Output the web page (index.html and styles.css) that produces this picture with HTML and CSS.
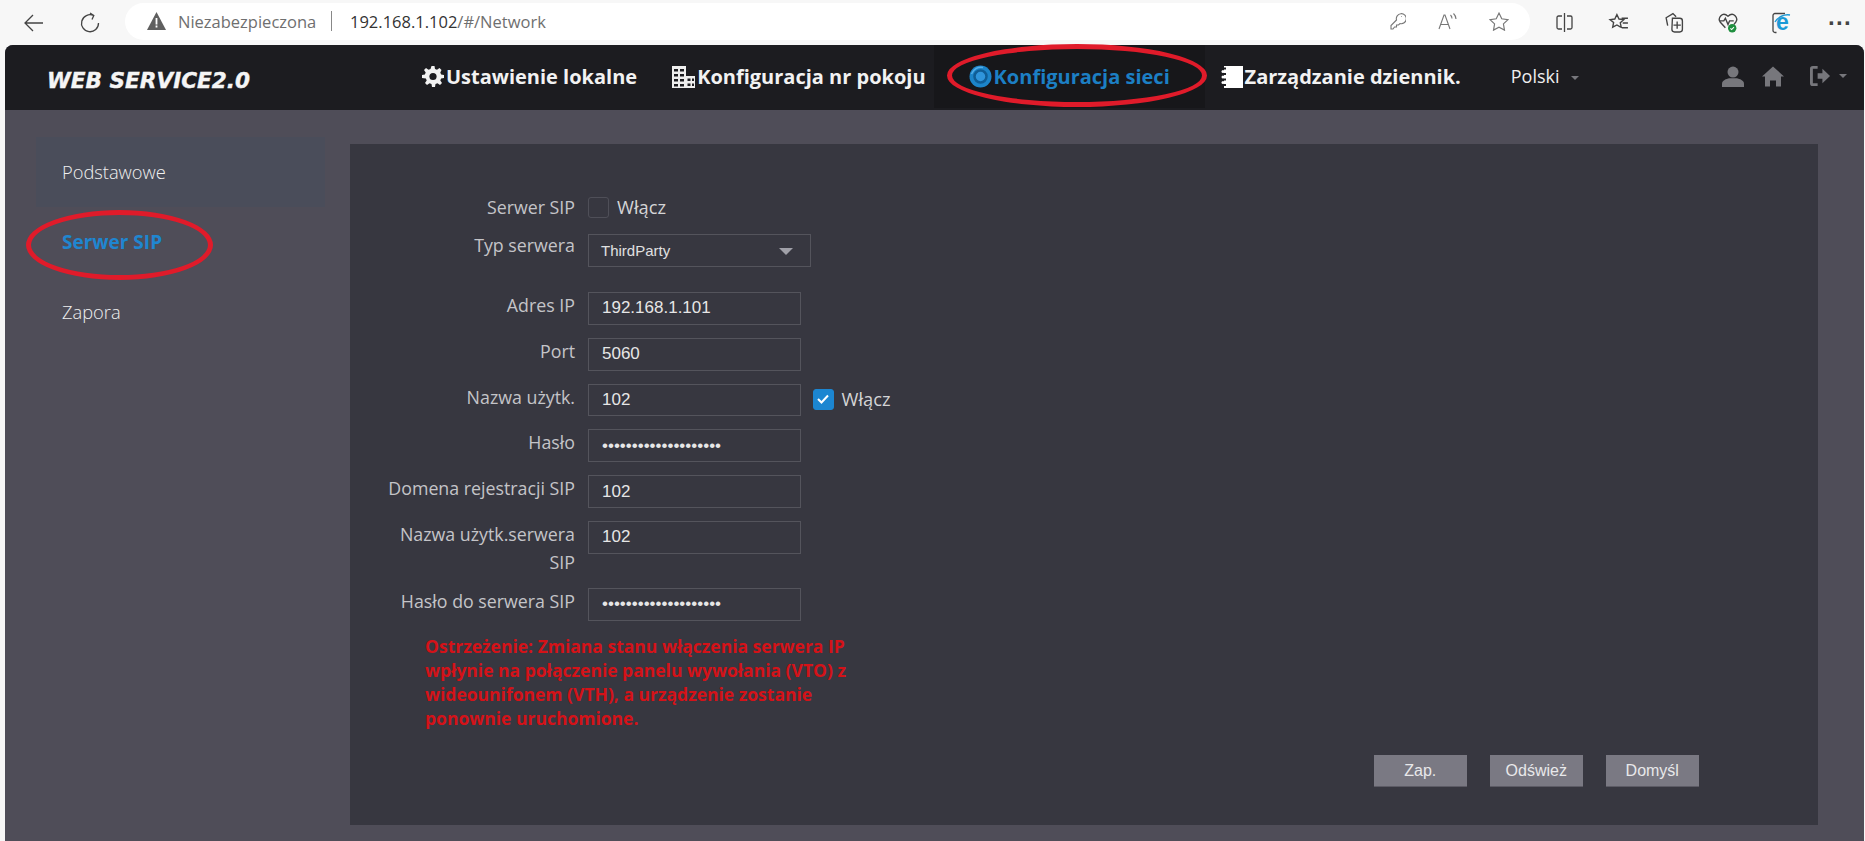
FILE: index.html
```html
<!DOCTYPE html>
<html lang="pl">
<head>
<meta charset="utf-8">
<title>Network</title>
<link rel="stylesheet" href="styles.css">
</head>
<body>
<div class="toolbar">
  <svg class="tb-back" width="20" height="18" viewBox="0 0 20 18"><path d="M9 1 1 9l8 8M1 9h18" class="ln"/></svg>
  <svg class="tb-reload" width="20" height="21" viewBox="0 0 20 21"><path d="M13.500 3.500A8.500 8.500 0 1 0 18.500 11M10 1l3.800 2.500L12 7.500" class="ln"/></svg>
  <div class="address">
    <svg class="warn" width="19" height="18" viewBox="0 0 19 18"><path d="M9.500 0 19 18H0Z" fill="#5f5f5f"/><path d="M8.600 6h1.800v6.500H8.600zM8.600 13.500h1.800v2H8.600z" fill="#fff"/></svg>
    <span class="not-secure">Niezabezpieczona</span>
    <span class="sep"></span>
    <span class="url"><span class="host">192.168.1.102</span>/#/Network</span>
    <span class="addr-icons">
      <svg width="16" height="18" viewBox="0 0 16 18"><path d="M1 17v-3.500l5.500-5.500A5 5 0 1 1 10 11.500L8.500 13H6.500v2h-2L3 17ZM11.200 4.500h.6" class="ln thin"/></svg>
      <svg width="19" height="17" viewBox="0 0 19 17"><path d="M1 16 6 2h1l5 14M3 11.500h7M12.500 2c1 1 1.500 2 1.500 3.500M15.500 .5c1.500 1.500 2.500 3 2.500 5.500" class="ln thin"/></svg>
      <svg width="20" height="19" viewBox="0 0 19 18"><path d="m9.500 1 2.600 5.400 5.900.8-4.300 4.100 1 5.900-5.200-2.800-5.200 2.800 1-5.900L1 7.200l5.900-.8Z" class="ln thin"/></svg>
    </span>
  </div>
  <div class="tb-icons">
    <svg class="ti-split" width="19" height="19" viewBox="0 0 17 19"><path d="M8.500 0v19M6 3H2.500A1.500 1.500 0 0 0 1 4.500v10A1.500 1.500 0 0 0 2.500 16H6M11 3h3.500A1.500 1.500 0 0 1 16 4.500v10a1.500 1.500 0 0 1-1.500 1.500H11" class="ln"/></svg>
    <svg class="ti-fav" width="22" height="20" viewBox="0 0 19 19"><path d="m7.500 1.500 2 4.200 4.500.6-3.300 3 .9 4.200-1-.4-3.100-1.700-4 2.100.9-4.500L1 6.300l4.500-.6ZM12 5h6M13 9.500h5M12 14h6" class="ln"/></svg>
    <svg class="ti-coll" width="20" height="21" viewBox="0 0 18 20"><path d="M3 13 1.500 5.500 8 1.500l3 3M7.500 6h7A2.500 2.500 0 0 1 17 8.500v8a2.500 2.500 0 0 1-2.500 2.500h-5A2.500 2.500 0 0 1 7 16.500ZM12 9v7M8.500 12.500h7" class="ln"/></svg>
    <svg class="ti-heart" width="20" height="21" viewBox="0 0 19 20"><path d="M7 15 2 9.500C-.5 6 4-1 9.500 4 15-1 19.500 6 17 9.500L15 12M2 8.500h3.500L7 6l2.500 6L11 8.500h4" class="ln"/><circle cx="13.500" cy="15.500" r="4" fill="#1f8f3f"/><path d="m11.800 15.500 1.200 1.200 2.200-2.200" fill="none" stroke="#fff"/></svg>
    <span class="ie">
      <svg width="20" height="22" viewBox="0 0 20 22"><path d="M4.500 20.500H3a2 2 0 0 1-2-2V3.500a2 2 0 0 1 2-2h10" class="ln"/><path d="M3 10C6 5 12 2 18 3" fill="none" stroke="#1b9ad6" stroke-width="1.400"/></svg>
      <span class="ie-e">e</span>
    </span>
    <span class="dots">···</span>
  </div>
</div>

<div class="app">
  <header class="topbar">
    <div class="logo">WEB SERVICE2.0</div>
    <nav class="nav">
      <a class="nav-item nav-local">
        <svg width="22" height="22" viewBox="0 0 22 22"><path d="M9.500 0h3l.5 3 2 .8 2.500-1.700 2 2L18.300 6.500l.8 2 2.900.5v3l-2.900.5-.8 2 1.700 2.400-2 2-2.500-1.700-2 .8-.5 3h-3l-.5-3-2-.8-2.500 1.700-2-2 1.700-2.400-.8-2L0 12V9l2.900-.5.8-2L2 4.100l2-2 2.500 1.700 2-.8Z" fill="#f2f2f2"/><circle cx="11" cy="10.500" r="3.600" fill="#1c1c20"/></svg>
        <span>Ustawienie lokalne</span>
      </a>
      <a class="nav-item nav-room">
        <svg width="23" height="22" viewBox="0 0 23 22"><path d="M0 0h14v22H0zM14 10h9v12h-9z" fill="#eee"/><path d="M2 3h4v2.500H2zM8 3h4v2.500H8zM2 8h4v2.500H2zM8 8h4v2.500H8zM2 13h4v2.500H2zM8 13h4v2.500H8zM2 18h4v2.500H2zM8 18h4v2.500H8zM15.500 12.500h3V15h-3zM20 12.500h2V15h-2zM15.500 17.500h3V20h-3zM20 17.500h2V20h-2z" fill="#1c1c20"/></svg>
        <span>Konfiguracja nr pokoju</span>
      </a>
      <a class="nav-item nav-net active">
        <svg width="23" height="23" viewBox="0 0 23 23"><circle cx="11.500" cy="11.500" r="11" fill="#1c84c9"/><circle cx="11.500" cy="11.500" r="6" fill="#2f95dc" stroke="#0f5d96" stroke-width="2.500"/><path d="M2.500 9C4 4.500 9 1.500 14 2.500" fill="none" stroke="#55aee8" stroke-width="1.500"/></svg>
        <span>Konfiguracja sieci</span>
        <i class="ring ring-nav"></i>
      </a>
      <a class="nav-item nav-log">
        <svg width="22" height="22" viewBox="0 0 22 22"><path d="M3 0h19v22H3z" fill="#fff"/><path d="M3 2.500h2M3 8h2M3 13.500h2M3 19h2" stroke="#1c1c20" stroke-width="2"/><circle cx="2" cy="5.500" r="1.500" fill="#fff"/><circle cx="2" cy="11" r="1.500" fill="#fff"/><circle cx="2" cy="16.500" r="1.500" fill="#fff"/></svg>
        <span>Zarządzanie dziennik.</span>
      </a>
    </nav>
    <div class="lang">Polski<i class="caret"></i></div>
    <div class="user-icons">
      <svg width="22" height="21" viewBox="0 0 20 19"><circle cx="10" cy="5.500" r="5" fill="#77777c"/><path d="M0 19v-3c0-3 4-4.500 6.500-5h7c2.500.5 6.500 2 6.500 5v3Z" fill="#77777c"/></svg>
      <svg width="22" height="21" viewBox="0 0 22 20"><path d="M11 0 22 10h-3v10h-5v-6H8v6H3V10H0Z" fill="#77777c"/></svg>
      <span class="logout">
        <svg width="21" height="22" viewBox="0 0 22 22"><path d="M8 2H3a1.500 1.500 0 0 0-1.500 1.500v15A1.500 1.500 0 0 0 3 20h5" fill="none" stroke="#77777c" stroke-width="3"/><path d="M8 8h5V3.500l8 7.500-8 7.500V14H8Z" fill="#77777c"/></svg>
        <i class="caret"></i>
      </span>
    </div>
  </header>

  <main class="content">
    <aside class="side">
      <a class="side-item selected">Podstawowe</a>
      <a class="side-item current">Serwer SIP<i class="ring ring-side"></i></a>
      <a class="side-item">Zapora</a>
    </aside>

    <section class="panel">
      <form class="form">
        <div class="row row-check">
          <label class="lbl">Serwer SIP</label>
          <span class="box"></span><span class="opt">Włącz</span>
        </div>
        <div class="row row-select">
          <label class="lbl">Typ serwera</label>
          <div class="select">ThirdParty<i class="sel-arrow"></i></div>
        </div>
        <div class="row">
          <label class="lbl">Adres IP</label>
          <input class="inp" value="192.168.1.101">
        </div>
        <div class="row">
          <label class="lbl">Port</label>
          <input class="inp" value="5060">
        </div>
        <div class="row">
          <label class="lbl">Nazwa użytk.</label>
          <input class="inp" value="102">
          <span class="box on"><svg width="14" height="12" viewBox="0 0 14 12"><path d="m2 6 3.500 3.500L12 2.500" fill="none" stroke="#fff" stroke-width="2"/></svg></span><span class="opt">Włącz</span>
        </div>
        <div class="row">
          <label class="lbl">Hasło</label>
          <input class="inp" type="password" value="xxxxxxxxxxxxxxxxxxxx">
        </div>
        <div class="row">
          <label class="lbl">Domena rejestracji SIP</label>
          <input class="inp" value="102">
        </div>
        <div class="row row-tall">
          <label class="lbl">Nazwa użytk.serwera SIP</label>
          <input class="inp" value="102">
        </div>
        <div class="row">
          <label class="lbl">Hasło do serwera SIP</label>
          <input class="inp" type="password" value="xxxxxxxxxxxxxxxxxxxx">
        </div>
        <p class="warning">Ostrzeżenie: Zmiana stanu włączenia serwera IP wpłynie na połączenie panelu wywołania (VTO) z wideounifonem (VTH), a urządzenie zostanie ponownie uruchomione.</p>
      </form>
      <div class="actions">
        <button class="btn" type="button">Zap.</button>
        <button class="btn" type="button">Odśwież</button>
        <button class="btn" type="button">Domyśl</button>
      </div>
    </section>
  </main>
</div>
</body>
</html>
```

FILE: styles.css
```css
* { box-sizing: border-box; }
html, body { height: 100%; }
body {
  margin: 0;
  overflow: hidden;
  background: #f7f7f7;
  font-family: "Open Sans", "Noto Sans", sans-serif;
  display: flex;
  flex-direction: column;
}
svg { flex: none; }
.ln { fill: none; stroke: #444; stroke-width: 1.3; }
.ln.thin { stroke: #777; stroke-width: 1.1; }

/* browser toolbar */
.toolbar {
  height: 45px;
  flex: none;
  display: flex;
  align-items: center;
  padding-left: 24px;
}
.tb-reload { margin-left: 36px; }
.address {
  margin-left: 25px;
  width: 1405px;
  height: 37px;
  flex: none;
  margin-bottom: 3px;
  background: #fff;
  border-radius: 19px;
  display: flex;
  align-items: center;
  padding-left: 22px;
  font-size: 16.500px;
  color: #6f6f6f;
}
.not-secure { margin-left: 12px; width: 138px; white-space: nowrap; }
.sep { width: 1px; height: 20px; background: #888; margin: 0 18px 0 15px; }
.host { color: #333; }
.addr-icons { margin-left: auto; display: flex; align-items: center; gap: 32px; padding-right: 21px; }
.tb-icons { display: flex; align-items: center; gap: 34px; margin-left: 25px; }
.ie { position: relative; display: flex; width: 20px; height: 22px; }
.ie-e {
  position: absolute;
  left: 4px;
  top: -3px;
  font: bold 23px/26px "Liberation Sans", sans-serif;
  color: #1b9ad6;
}
.dots { font: bold 24px "Liberation Sans", sans-serif; color: #444; line-height: 1; margin-left: 2px; }

/* app frame */
.app {
  flex: 1;
  min-height: 0;
  margin: 0 1px 0 5px;
  display: flex;
  flex-direction: column;
  background: #4f4d58;
  border-radius: 8px 8px 0 0;
}
.topbar {
  height: 65px;
  flex: none;
  background: #1c1c20;
  border-radius: 8px 8px 0 0;
  display: flex;
  align-items: stretch;
  color: #fff;
}
.logo {
  width: 300px;
  flex: none;
  padding-left: 42px;
  align-self: center;
  margin-top: 5px;
  font: italic bold 21.600px "DejaVu Sans", sans-serif;
  -webkit-text-stroke: .4px #f5f5f5;
  white-space: nowrap;
  color: #f5f5f5;
}
.nav { display: flex; align-items: stretch; margin-left: 117px; }
.nav-item {
  position: relative;
  display: flex;
  align-items: center;
  gap: 2px;
  height: 63px;
  font-size: 20px;
  font-weight: 700;
  color: #f2f2f2;
  white-space: nowrap;
}
.nav-room { margin-left: 35px; }
.nav-net { margin-left: 8px; padding-left: 35px; width: 271px; background: #17171a; color: #1c7fc4; }
.nav-log { margin-left: 16px; }
.lang {
  margin-left: 50px;
  align-self: center;
  margin-top: -3px;
  font-size: 18px;
  color: #eee;
  white-space: nowrap;
}
.caret {
  display: inline-block;
  margin-left: 11px;
  vertical-align: middle;
  border: 4px solid transparent;
  border-top-color: #77777c;
  border-bottom-width: 0;
}
.user-icons {
  margin-left: auto;
  display: flex;
  align-items: center;
  gap: 18px;
  padding: 0 17px 3px 0;
}
.logout { display: flex; align-items: center; margin-left: 8px; }
.logout .caret { margin-left: 8px; }

.ring {
  position: absolute;
  border: 5px solid #e01b2a;
  border-radius: 50%;
  pointer-events: none;
}
.ring-nav { left: 13px; top: -1px; width: 260px; height: 63px; }
.ring-side { left: -10px; top: 3px; width: 187px; height: 70px; }

/* content */
.content { flex: 1; display: flex; min-height: 0; padding: 27px 46px 16px 31px; }
.side { width: 314px; flex: none; }
.side-item {
  position: relative;
  display: block;
  width: 289px;
  height: 70px;
  line-height: 70px;
  padding-left: 26px;
  font-size: 18.300px;
  font-weight: 300;
  color: #f0f0f0;
}
.side-item.selected { background: #4a4d5a; }
.side-item.current { color: #1f86d0; font-weight: 700; font-size: 19px; }

.panel {
  flex: 1;
  margin-top: 7px;
  background: #373740;
  display: flex;
  flex-direction: column;
  padding-top: 53px;
}
.form { flex: 1; }
.row {
  display: flex;
  align-items: flex-start;
  margin-bottom: 13px;
  height: 32.800px;
}
.row-check { height: 21px; margin-bottom: 16px; }
.row-select { height: 33px; margin-bottom: 25px; }
.row-tall { height: 54px; }
.lbl {
  width: 200px;
  flex: none;
  margin: -1px 13px 0 25px;
  text-align: right;
  font-size: 17.800px;
  font-weight: 400;
  line-height: 28px;
  color: #c4c4c8;
}
.row-check .lbl { margin-top: -4px; }
.row-select .lbl { margin-top: -3px; }
.box {
  width: 21px;
  height: 21px;
  flex: none;
  border: 1px solid #4f4f58;
  border-radius: 3px;
}
.box.on {
  margin: 5px 0 0 12px;
  background: #1c86d1;
  border-color: #1c86d1;
  display: flex;
  align-items: center;
  justify-content: center;
}
.opt {
  margin-left: 8px;
  font-size: 18.300px;
  line-height: 21px;
  color: #d4d4d6;
}
.row-check .opt { margin-top: -1px; }
.row .box.on + .opt { margin-top: 4px; }
.select {
  position: relative;
  width: 223px;
  height: 33px;
  border: 1px solid #54545c;
  padding-left: 12px;
  font: 15px/31px "Liberation Sans", sans-serif;
  color: #e0e0e0;
}
.sel-arrow {
  position: absolute;
  right: 17px;
  top: 13px;
  border: 7px solid transparent;
  border-top-color: #a0a0a8;
  border-bottom-width: 0;
}
.inp {
  width: 212.500px;
  height: 32.800px;
  flex: none;
  border: 1px solid #54545c;
  border-radius: 0;
  background: transparent;
  padding: 0 0 0 13px;
  font: 17px "Liberation Sans", sans-serif;
  color: #e6e6e6;
  outline: none;
}
.warning {
  margin: 0 0 0 75px;
  width: 450px;
  font-size: 17.500px;
  font-weight: 700;
  line-height: 24px;
  color: #d41218;
}
.actions {
  display: flex;
  justify-content: flex-end;
  gap: 23.500px;
  padding: 0 119.500px 38px 0;
}
.btn {
  width: 92.500px;
  height: 32px;
  border: 0;
  border-bottom: 1px solid #5c5b65;
  border-radius: 0;
  background: #7a7983;
  font: 16px "Liberation Sans", sans-serif;
  color: #e8e8ea;
  padding: 0;
}
```
